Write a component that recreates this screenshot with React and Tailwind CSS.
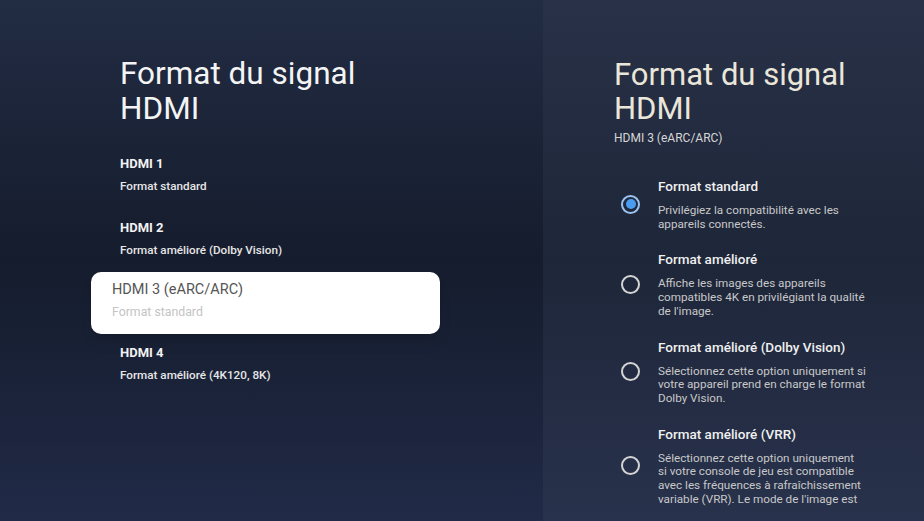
const hdmiInputs = [
  { name: 'HDMI 1', format: 'Format standard' },
  { name: 'HDMI 2', format: 'Format amélioré (Dolby Vision)' },
  { name: 'HDMI 3 (eARC/ARC)', format: 'Format standard', focused: true },
  { name: 'HDMI 4', format: 'Format amélioré (4K120, 8K)' },
];

// lines are broken the way the TV lays them out
const options = [
  {
    title: 'Format standard',
    desc: ['Privilégiez la compatibilité avec les', 'appareils connectés.'],
    selected: true,
  },
  {
    title: 'Format amélioré',
    desc: ['Affiche les images des appareils', 'compatibles 4K en privilégiant la qualité', "de l'image."],
  },
  {
    title: 'Format amélioré (Dolby Vision)',
    desc: ['Sélectionnez cette option uniquement si', 'votre appareil prend en charge le format', 'Dolby Vision.'],
  },
  {
    title: 'Format amélioré (VRR)',
    desc: [
      'Sélectionnez cette option uniquement',
      'si votre console de jeu est compatible',
      'avec les fréquences à rafraîchissement',
      "variable (VRR). Le mode de l'image est",
    ],
  },
];

const Radio = ({ selected }) => (
  <div
    className={`w-[19px] h-[19px] rounded-full border-2 flex items-center justify-center shrink-0 ${
      selected ? 'border-[#9cc3f0]' : 'border-[#d4d4d4]'
    }`}
  >
    {selected && <div className="w-[10px] h-[10px] rounded-full bg-[#4a9cf0]" />}
  </div>
);

const HdmiRow = ({ item }) => {
  if (item.focused) {
    return (
      <div className="-ml-[29px] -mt-[10px] mb-[9px] w-[349px] h-[62px] rounded-[10px] bg-white pl-[21px] pt-[8px] shadow-lg">
        <div className="text-[14.5px] leading-[20px] text-[#555]">{item.name}</div>
        <div className="mt-[2px] text-[12.3px] leading-[20px] text-[#c4c4c4]">{item.format}</div>
      </div>
    );
  }
  return (
    <div className="mb-[23px] last:mb-0">
      <div className="text-[13px] leading-[20px] font-bold text-[#f2f2f2]">{item.name}</div>
      <div className="mt-[4px] text-[11.7px] leading-[17px] font-medium text-[#e6e6e6]">{item.format}</div>
    </div>
  );
};

export default function App() {
  return (
    <div
      className="w-[924px] h-[521px] overflow-hidden flex bg-[#1a2236]"
      style={{ fontFamily: 'Roboto, "Liberation Sans", sans-serif' }}
    >
      <div className="w-[543px] h-full shrink-0 pl-[120px] pt-[56px] bg-gradient-to-b from-[#222c43] via-[#151c2d] to-[#212a47]">
        <h1 className="text-[31.5px] leading-[35px] text-[#f4f4f4] font-normal">
          Format du signal
          <br />
          HDMI
        </h1>
        <div className="mt-[28px] flex flex-col">
          {hdmiInputs.map((item) => (
            <HdmiRow key={item.name} item={item} />
          ))}
        </div>
      </div>

      <div className="flex-1 h-full pl-[71px] pt-[58px] bg-gradient-to-b from-[#283147] via-[#1e2639] to-[#28324c]">
        <h2 className="text-[31px] leading-[34px] text-[#ebe6da] font-normal">
          Format du signal
          <br />
          HDMI
        </h2>
        <div className="mt-[4px] text-[12px] leading-[16px] text-[#d6d6d6]">HDMI 3 (eARC/ARC)</div>

        <div className="mt-[31px] flex flex-col gap-[19px]">
          {options.map((opt) => (
            <div key={opt.title} className="flex items-center">
              <div className="w-[44px] flex justify-start pl-[7px]">
                <Radio selected={opt.selected} />
              </div>
              <div>
                <div className="text-[13.5px] leading-[18px] font-medium text-[#f0f0f0]">{opt.title}</div>
                <div className="mt-[9px] text-[11.7px] leading-[13.7px] text-[#c8c8c8] whitespace-nowrap">
                  {opt.desc.map((line) => (
                    <div key={line}>{line}</div>
                  ))}
                </div>
              </div>
            </div>
          ))}
        </div>
      </div>
    </div>
  );
}
